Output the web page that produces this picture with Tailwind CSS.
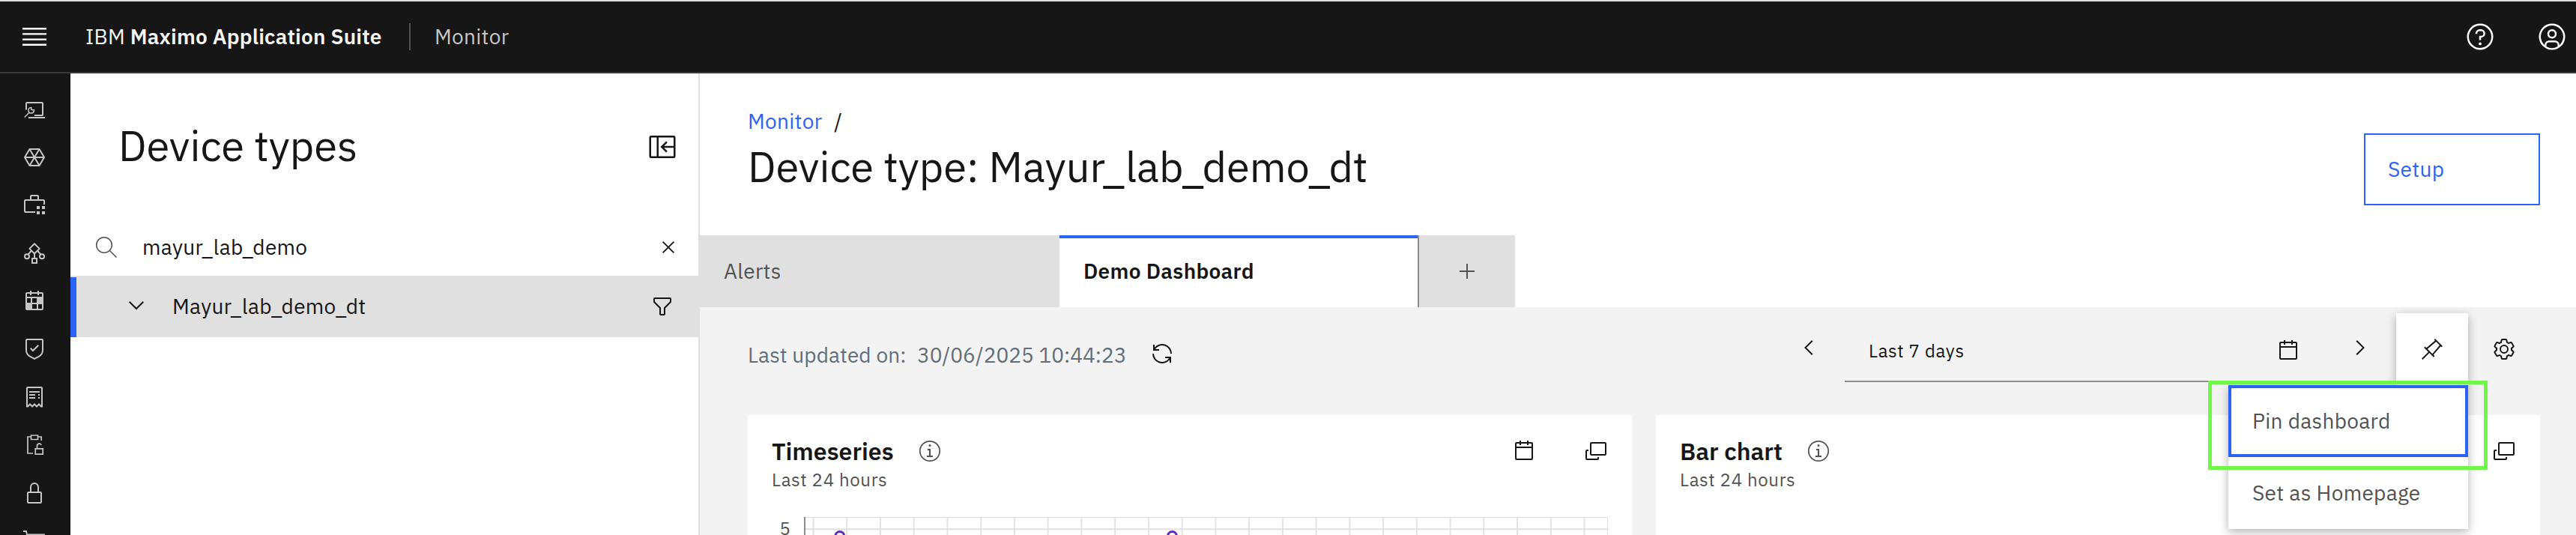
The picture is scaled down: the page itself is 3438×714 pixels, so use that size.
<!DOCTYPE html>
<html lang="en">
<head>
<meta charset="utf-8">
<title>Monitor - Device types</title>
<script src="https://cdn.jsdelivr.net/npm/@tailwindcss/browser@4"></script>
</head>
<body class="h-[714px] overflow-hidden bg-white font-['IBM_Plex_Sans','Noto_Sans',sans-serif] text-[28px] leading-9 tracking-[0.32px] text-[#161616]">
<div class="relative flex h-[714px] w-[3438px] flex-col overflow-hidden border-t-2 border-[#dddfe0]">

  <header class="flex h-24 shrink-0 items-center border-b-2 border-[#393939] bg-[#161616] text-[#f4f4f4]">
    <button class="flex w-[92px] justify-center"><svg class="size-10" viewBox="0 0 20 20" fill="#fff"><path d="M2 14.8h16V16H2zM2 11.2h16v1.2H2zM2 7.6h16v1.2H2zM2 4h16v1.2H2z"/></svg></button>
    <div class="ml-[22px] w-[432px] whitespace-nowrap tracking-[0.2px]">IBM <span class="font-semibold">Maximo Application Suite</span></div>
    <div class="h-9 w-0.5 bg-[#525252]"></div>
    <div class="ml-8 text-[#c6c6c6]">Monitor</div>
    <div class="ml-auto flex gap-14 pr-3">
      <svg class="size-10" viewBox="0 0 32 32" fill="#fff"><path d="M16 2a14 14 0 1 0 14 14A14 14 0 0 0 16 2zm0 26a12 12 0 1 1 12-12 12 12 0 0 1-12 12z"/><circle cx="16" cy="23.5" r="1.5"/><path d="M17 8h-1.5A4.49 4.49 0 0 0 11 12.5V13h2v-.5a2.5 2.5 0 0 1 2.5-2.5H17a2.5 2.5 0 0 1 0 5h-2v4.5h2V17a4.5 4.5 0 0 0 0-9z"/></svg>
      <svg class="size-10" viewBox="0 0 32 32" fill="#fff"><path d="M16 8a5 5 0 1 0 5 5 5 5 0 0 0-5-5zm0 8a3 3 0 1 1 3-3 3 3 0 0 1-3 3z"/><path d="M16 2a14 14 0 1 0 14 14A14 14 0 0 0 16 2zm-6 24.38V25a3 3 0 0 1 3-3h6a3 3 0 0 1 3 3v1.38a11.9 11.9 0 0 1-12 0zm13.99-1.45A5 5 0 0 0 19 20h-6a5 5 0 0 0-4.99 4.93 12 12 0 1 1 15.98 0z"/></svg>
    </div>
  </header>

  <div class="flex min-h-0 flex-1">
    <nav class="flex w-[94px] shrink-0 flex-col gap-8 overflow-hidden bg-[#161616] pt-8 pl-[30px] text-[#c6c6c6]">
      <svg class="size-8 shrink-0" viewBox="0 0 32 32" fill="none" stroke="currentColor" stroke-width="2"><path d="M5 16.500V8a1 1 0 0 1 1-1h20a1 1 0 0 1 1 1v15a1 1 0 0 1-1 1H16M8 27h22"/><path d="M2.700 26.500l6.500-6.500M11.500 13.400a3.800 3.800 0 1 0 4 4.300M11.800 13v3.200h1M12.500 16.800h3.700" stroke-width="1.500"/></svg>
      <svg class="size-8 shrink-0" viewBox="0 0 32 32" fill="none" stroke="currentColor" stroke-width="2" stroke-linejoin="round"><path d="M9.500 5h13L29 16l-6.500 11h-13L3 16zM3 16h26M9.500 5l13 22M22.500 5l-13 22"/></svg>
      <svg class="size-8 shrink-0" viewBox="0 0 32 32" fill="currentColor"><path d="M28 8h-6V4a2 2 0 0 0-2-2h-8a2 2 0 0 0-2 2v4H4a2 2 0 0 0-2 2v14a2 2 0 0 0 2 2h13v-2H4V10h24v5h2v-5a2 2 0 0 0-2-2zM12 4h8v4h-8zM19 17h4v4h-4zM26 17h4v4h-4zM19 24h4v4h-4zM26 24h4v4h-4z"/></svg>
      <svg class="size-8 shrink-0" viewBox="0 0 32 32" fill="none" stroke="currentColor" stroke-width="2"><path d="M16 3.300l6.600 6.600-6.600 6.600-6.600-6.600z" stroke-linejoin="round"/><circle cx="6" cy="20.300" r="3"/><circle cx="26" cy="20.300" r="3"/><path d="M13 23h6v6h-6zM16 16.500V23M12 12.500l-4.400 5.200M20 12.500l4.400 5.200"/></svg>
      <svg class="size-8 shrink-0" viewBox="0 0 32 32" fill="currentColor"><path d="M26 4h-4V2h-2v2h-8V2h-2v2H6a2 2 0 0 0-2 2v20a2 2 0 0 0 2 2h20a2 2 0 0 0 2-2V6a2 2 0 0 0-2-2zM6 6h4v2h2V6h8v2h2V6h4v4H6zm0 6h5v6H6zm13 14h-6v-6h6zm0-8h-6v-6h6zm7 8h-5v-6h5z" fill-rule="evenodd"/></svg>
      <svg class="size-8 shrink-0" viewBox="0 0 32 32" fill="currentColor"><path d="M14 16.590L11.410 14 10 15.410l4 4 8-8L20.590 10z"/><path d="M16 30l-6.180-3.290A10.980 10.980 0 0 1 4 17V4a2 2 0 0 1 2-2h20a2 2 0 0 1 2 2v13a10.980 10.980 0 0 1-5.820 9.710zM6 4v13a8.990 8.990 0 0 0 4.770 7.940L16 27.730l5.230-2.790A8.990 8.990 0 0 0 26 17V4z"/></svg>
      <svg class="size-8 shrink-0" viewBox="0 0 32 32" fill="none" stroke="currentColor" stroke-width="2"><path d="M6 29.500V4a1 1 0 0 1 1-1h18a1 1 0 0 1 1 1v25.500M6 28.500h1l3-3 3 3 3-3 3 3 3-3 3 3h1M9 9h14M9 13h8M21 13h2M9 17h8M21 17h2"/></svg>
      <svg class="size-8 shrink-0" viewBox="0 0 32 32" fill="none" stroke="currentColor" stroke-width="1.700"><path d="M11 5H7v22h7M21 5h4.200v5"/><path d="M11.500 3h9v5.500h-9z"/><path d="M17.200 20.800h10v7.400h-10zM19.500 20.800V17a2.900 2.900 0 0 1 5.600-1"/></svg>
      <svg class="size-8 shrink-0" viewBox="0 0 32 32" fill="currentColor"><path d="M24 14h-2V8a6 6 0 0 0-12 0v6H8a2 2 0 0 0-2 2v12a2 2 0 0 0 2 2h16a2 2 0 0 0 2-2V16a2 2 0 0 0-2-2zM12 8a4 4 0 0 1 8 0v6h-8zm12 20H8V16h16z"/></svg>
      <svg class="size-8 shrink-0" viewBox="0 0 32 32" fill="none" stroke="currentColor" stroke-width="1.800"><path d="M1 3h4l4 20h17l3-15.500H6"/></svg>
    </nav>

    <aside class="flex w-[840px] shrink-0 flex-col border-r-2 border-[#e0e0e0]">
      <div class="flex h-[194px] items-start justify-between pt-[60px] pr-7 pl-16">
        <h2 class="text-[56px] leading-[72px] tracking-normal">Device types</h2>
        <svg class="mt-[18px] size-10" viewBox="0 0 32 32" fill="currentColor"><path d="M28 4H4a2 2 0 0 0-2 2v20a2 2 0 0 0 2 2h24a2 2 0 0 0 2-2V6a2 2 0 0 0-2-2zM10 26H4V6h6zm18-11H17.830l3.580-3.590L20 10l-6 6 6 6 1.410-1.410L17.830 17H28v9H12V6h16z"/></svg>
      </div>
      <div class="flex h-[76px] items-center pr-6 pl-8">
        <svg class="size-8" viewBox="0 0 32 32" fill="none" stroke="#525252" stroke-width="1.500"><circle cx="13" cy="13" r="10.300"/><path d="M20.500 20.500l9 9"/></svg>
        <div class="ml-8">mayur_lab_demo</div>
        <svg class="ml-auto size-8" viewBox="0 0 32 32" fill="none" stroke="currentColor" stroke-width="1.800"><path d="M8.600 8.600l14.800 14.800M23.400 8.600L8.600 23.400"/></svg>
      </div>
      <div class="flex h-[82px] items-center bg-[#e0e0e0] pr-8">
        <div class="mt-0.5 w-2 self-stretch bg-[#2c62f6]"></div>
        <svg class="ml-16 size-8" viewBox="0 0 32 32" fill="none" stroke="currentColor" stroke-width="2"><path d="M6.700 9.700L16 19l9.300-9.300"/></svg>
        <div class="ml-8">Mayur_lab_demo_dt</div>
        <svg class="ml-auto size-8" viewBox="0 0 32 32" fill="currentColor"><path d="M18 28h-4a2 2 0 0 1-2-2v-7.590L4.590 11A2 2 0 0 1 4 9.590V6a2 2 0 0 1 2-2h20a2 2 0 0 1 2 2v3.590a2 2 0 0 1-.590 1.410L20 18.410V26a2 2 0 0 1-2 2zM6 6v3.590l8 8V26h4v-8.410l8-8V6z"/></svg>
      </div>
    </aside>

    <main class="flex min-w-0 flex-1 flex-col bg-[#f3f3f3]">
      <div class="flex h-[216px] shrink-0 items-start justify-between bg-white pt-[46px] pr-12 pl-16">
        <div>
          <div class="flex"><span class="text-[#2c62f6]">Monitor</span><span class="ml-4">/</span></div>
          <h1 class="mt-1.5 text-[56px] leading-[72px] tracking-normal">Device type: Mayur_lab_demo_dt</h1>
        </div>
        <button class="mt-[34px] flex h-24 w-[235px] items-center border-2 border-[#2c62f6] pl-[30px] text-[#2c62f6]">Setup</button>
      </div>

      <div class="flex h-24 shrink-0 bg-white">
        <div class="flex w-[480px] items-center bg-[#e0e0e0] pl-8 text-[#525252]">Alerts</div>
        <div class="flex w-[478px] items-center border-t-4 border-[#2c62f6] pb-1 pl-8 font-semibold">Demo Dashboard</div>
        <div class="flex w-[130px] items-center justify-center border-l-2 border-[#8d8d8d] bg-[#e0e0e0]">
          <svg class="size-8" viewBox="0 0 32 32" fill="none" stroke="#525252" stroke-width="2"><path d="M16 6v20M6 16h20"/></svg>
        </div>
      </div>

      <div class="flex h-36 shrink-0 items-start pr-12 pl-16">
        <div class="mt-[46px] flex items-center tracking-normal text-[#626e77]">
          <span class="w-[226px] tracking-[0.100px]">Last updated on:</span>
          <span class="w-[280px]">30/06/2025 10:44:23</span>
        </div>
        <svg class="mt-[46px] ml-[31px] size-8" viewBox="0 0 32 32" fill="currentColor"><path d="M12 10H6.780A11 11 0 0 1 27 16h2A13 13 0 0 0 6 7.680V4H4v8h8zM20 22h5.220A11 11 0 0 1 5 16H3a13 13 0 0 0 23 8.320V28h2v-8h-8z"/></svg>

        <div class="mt-2 ml-auto flex">
          <button class="flex h-[92px] w-24 items-center justify-center"><svg class="size-8" viewBox="0 0 32 32" fill="none" stroke="currentColor" stroke-width="2"><path d="M20.800 6.700L11.500 16l9.300 9.300"/></svg></button>
          <div class="flex h-[92px] w-[640px] items-center justify-between border-b-2 border-[#8d8d8d] px-8 pt-[10px] text-2xl tracking-[0.640px]">
            <span>Last 7 days</span>
            <svg class="size-8" viewBox="0 0 32 32" fill="currentColor"><path d="M26 4h-4V2h-2v2h-8V2h-2v2H6a2 2 0 0 0-2 2v20a2 2 0 0 0 2 2h20a2 2 0 0 0 2-2V6a2 2 0 0 0-2-2zm0 22H6V12h20zm0-16H6V6h4v2h2V6h8v2h2V6h4z"/></svg>
          </div>
          <button class="flex h-[92px] w-24 items-center justify-center"><svg class="size-8" viewBox="0 0 32 32" fill="none" stroke="currentColor" stroke-width="2"><path d="M11.200 6.700L20.500 16l-9.300 9.300"/></svg></button>
          <div class="relative z-10 size-24 shadow-[0_4px_12px_rgba(0,0,0,0.3)]">
            <div class="absolute top-24 right-0 h-48 w-80 bg-white text-[#525252] shadow-[0_4px_12px_rgba(0,0,0,0.3)]">
              <div class="flex h-24 items-center border-4 border-[#2c62f6] pl-7">Pin dashboard</div>
              <div class="flex h-24 items-center pl-8">Set as Homepage</div>
            </div>
            <div class="absolute inset-0 flex items-center justify-center bg-white">
              <svg class="size-8" viewBox="0 0 32 32" fill="currentColor"><path d="M28.590 13.310L30 11.900 20 2l-1.310 1.420 1.180 1.180L8.380 14.320l-1.720-1.710L5.250 14l5.660 5.680L2 28.580 3.410 30l8.910-8.910L18 26.750l1.390-1.420-1.710-1.710L27.400 12.130zM16.260 22.200L9.800 15.740 21.290 6 26 10.710z"/></svg>
            </div>
            <div class="absolute top-[90px] -right-[26px] h-[119px] w-[373px] border-5 border-[#72f54a]"></div>
          </div>
          <button class="flex size-24 items-center justify-center"><svg class="size-8" viewBox="0 0 32 32" fill="currentColor"><path d="M27 16.760V15.230l1.920-1.680A2 2 0 0 0 29.300 11L26.940 7a2 2 0 0 0-1.730-1 2 2 0 0 0-.640.100l-2.430.820a11.350 11.350 0 0 0-1.310-.750l-.510-2.520a2 2 0 0 0-2-1.610H13.640a2 2 0 0 0-2 1.610l-.510 2.520a11.480 11.480 0 0 0-1.320.750L7.430 6.060A2 2 0 0 0 6.790 6 2 2 0 0 0 5.060 7L2.700 11a2 2 0 0 0 .410 2.510L5 15.240V16.770L3.110 18.450A2 2 0 0 0 2.700 21L5.060 25a2 2 0 0 0 1.730 1 2 2 0 0 0 .640-.100l2.430-.820a11.350 11.350 0 0 0 1.310.750l.510 2.520a2 2 0 0 0 2 1.610h4.720a2 2 0 0 0 2-1.610l.510-2.520a11.480 11.480 0 0 0 1.320-.750l2.420.820a2 2 0 0 0 .640.100 2 2 0 0 0 1.730-1L29.300 21a2 2 0 0 0-.410-2.510zM25.210 24l-3.430-1.160a8.860 8.860 0 0 1-2.710 1.570L18.360 28H13.640l-.710-3.550a9.360 9.360 0 0 1-2.700-1.570L6.790 24 4.430 20l2.720-2.400a8.900 8.900 0 0 1 0-3.130L4.430 12 6.790 8l3.430 1.160a8.860 8.860 0 0 1 2.710-1.570L13.640 4h4.720l.710 3.550a9.360 9.360 0 0 1 2.700 1.570L25.210 8 27.570 12l-2.720 2.400a8.900 8.900 0 0 1 0 3.130L27.570 20z"/><circle cx="16" cy="16" r="5" fill="none" stroke="currentColor" stroke-width="2"/></svg></button>
        </div>
      </div>

      <div class="flex flex-1 gap-8 pr-12 pl-16">
        <section class="flex h-[160px] w-[1180px] flex-col bg-white px-8 pt-[27px]">
          <div class="flex items-center">
            <h3 class="text-[32px] leading-[42px] font-semibold tracking-normal">Timeseries</h3>
            <svg class="ml-8 size-8" viewBox="0 0 32 32" fill="#525252"><path d="M17 22v-9h-4v2h2v7h-3v2h8v-2z"/><circle cx="16" cy="8.500" r="1.500"/><circle cx="16" cy="16" r="13.200" fill="none" stroke="#525252" stroke-width="1.700"/></svg>
            <svg class="ml-auto size-8" viewBox="0 0 32 32" fill="currentColor"><path d="M26 4h-4V2h-2v2h-8V2h-2v2H6a2 2 0 0 0-2 2v20a2 2 0 0 0 2 2h20a2 2 0 0 0 2-2V6a2 2 0 0 0-2-2zm0 22H6V12h20zm0-16H6V6h4v2h2V6h8v2h2V6h4z"/></svg>
            <svg class="ml-16 size-8" viewBox="0 0 32 32" fill="currentColor"><path d="M28 4H10a2 2 0 0 0-2 2v14a2 2 0 0 0 2 2h18a2 2 0 0 0 2-2V6a2 2 0 0 0-2-2zm0 16H10V6h18z"/><path d="M18 26H4V16h2v-2H4a2 2 0 0 0-2 2v10a2 2 0 0 0 2 2h14a2 2 0 0 0 2-2v-2h-2z"/></svg>
          </div>
          <div class="mt-px text-2xl tracking-[0.640px] text-[#525252]">Last 24 hours</div>
          <svg class="h-[58px] w-[1116px] shrink-0" viewBox="0 0 1116 58" fill="none">
            <defs><pattern id="grid" x="54.500" width="44.740" height="58" patternUnits="userSpaceOnUse"><path d="M1 0v58" stroke="#e0e0e0" stroke-width="1.800"/></pattern></defs>
            <rect x="54" y="34" width="1061" height="24" fill="url(#grid)"/>
            <path d="M44 34.500h1071.500V58" stroke="#e0e0e0"/>
            <path d="M45 50.300h1071" stroke="#e0e0e0" stroke-width="2"/>
            <path d="M44 34v24" stroke="#8d8d8d" stroke-width="2"/>
            <g stroke="#5e2bbd" stroke-width="3" fill="#fff"><circle cx="90.800" cy="59.500" r="6"/><circle cx="534.500" cy="59.500" r="6"/></g>
            <text x="10.500" y="57.500" font-size="24" fill="#525252">5</text>
          </svg>
        </section>
        <section class="flex h-[160px] w-[1180px] flex-col bg-white px-8 pt-[27px]">
          <div class="flex items-center">
            <h3 class="text-[32px] leading-[42px] font-semibold tracking-normal">Bar chart</h3>
            <svg class="ml-8 size-8" viewBox="0 0 32 32" fill="#525252"><path d="M17 22v-9h-4v2h2v7h-3v2h8v-2z"/><circle cx="16" cy="8.500" r="1.500"/><circle cx="16" cy="16" r="13.200" fill="none" stroke="#525252" stroke-width="1.700"/></svg>
            <svg class="ml-auto size-8" viewBox="0 0 32 32" fill="currentColor"><path d="M28 4H10a2 2 0 0 0-2 2v14a2 2 0 0 0 2 2h18a2 2 0 0 0 2-2V6a2 2 0 0 0-2-2zm0 16H10V6h18z"/><path d="M18 26H4V16h2v-2H4a2 2 0 0 0-2 2v10a2 2 0 0 0 2 2h14a2 2 0 0 0 2-2v-2h-2z"/></svg>
          </div>
          <div class="mt-px text-2xl tracking-[0.640px] text-[#525252]">Last 24 hours</div>
        </section>
      </div>
    </main>
  </div>
</div>
</body>
</html>
